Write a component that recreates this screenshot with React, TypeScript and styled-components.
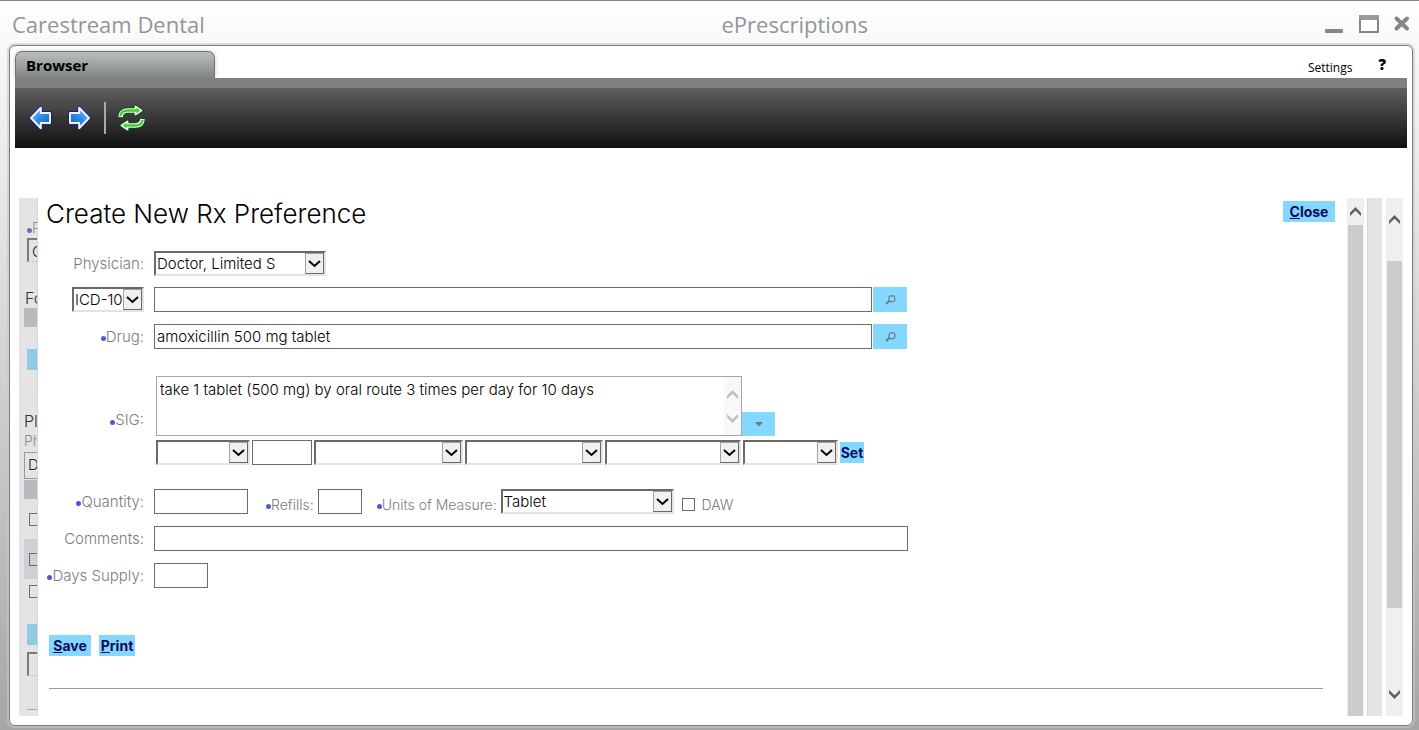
import React from "react";
import styled, { createGlobalStyle, css } from "styled-components";

const GlobalStyle = createGlobalStyle`
  *, *::before, *::after { box-sizing: border-box; }
  body { margin: 0; }
`;

const formFont = `"Century Gothic", Inter, "Open Sans", sans-serif`;
const chromeFont = `"Segoe UI", "Open Sans", "Noto Sans", sans-serif`;

/* ---------- window chrome ---------- */

const Window = styled.div`
  min-height: 100vh;
  display: flex;
  flex-direction: column;
  padding: 0 6px 4px 9px;
  border-top: 1px solid #858585;
  background: linear-gradient(#ffffff, #f6f6f6 8%, #e4e4e4 30%, #a6a6a6);
  font-family: ${chromeFont};
`;

const TitleBar = styled.header`
  height: 44px;
  display: flex;
  align-items: center;
  margin: 0 -6px 0 -9px;
  padding-top: 2px;
  color: #949599;
  font-size: 22px;
  line-height: 32px;
`;

const TitleHalf = styled.div`
  flex: 1 1 50%;
  display: flex;
  align-items: center;
  justify-content: space-between;
  padding: 0 8px 0 12px;
`;

const WindowButtons = styled.div`
  display: flex;
  align-items: center;
  gap: 14px;
`;

const WindowButton = styled.button`
  display: flex;
  padding: 0;
  border: 0;
  background: none;
`;

const Panel = styled.main`
  flex: 1;
  display: flex;
  flex-direction: column;
  padding: 5px;
  border: 1px solid #7b7b7b;
  border-radius: 6px;
  background: #fff;
  box-shadow: 0 0 0 2px rgba(200, 200, 200, 0.6);
`;

const TabRow = styled.div`
  display: flex;
  justify-content: space-between;
  height: 27px;
`;

const Tab = styled.button`
  width: 200px;
  padding: 0 10px;
  border: 1px solid #6f7373;
  border-bottom: 0;
  border-radius: 7px 7px 0 0;
  background: linear-gradient(#bcbfbf, #7f8483);
  box-shadow: 0 0 5px rgba(0, 0, 0, 0.2);
  font: bold 15px/20px ${chromeFont};
  text-align: left;
  color: #000;
`;

const TabLinks = styled.div`
  display: flex;
  align-items: center;
  gap: 26px;
  padding-right: 20px;
`;

const SettingsLink = styled.a`
  padding-top: 6px;
  font-size: 12px;
  line-height: 16px;
  color: #000;
  text-decoration: none;
`;

const HelpButton = styled.button`
  padding: 0 1px 2px 0;
  border: 0;
  background: none;
  font: 800 15px/20px ${chromeFont};
  color: #000;
`;

const Toolbar = styled.nav`
  display: flex;
  align-items: center;
  height: 70px;
  padding: 0 13px;
  border-top: 10px solid #7d8281;
  background: linear-gradient(#5f5f5f, #101010);
  gap: 12px;
`;

const ToolButton = styled.button`
  display: flex;
  padding: 0;
  border: 0;
  background: none;
`;

const ToolDivider = styled.span`
  width: 2px;
  height: 32px;
  background: #a9a9a9;
`;

/* ---------- content area ---------- */

const Content = styled.div`
  flex: 1;
  display: flex;
  margin-top: 50px;
  padding: 0 4px 4px;
  font-family: ${formFont};
`;

const Underlay = styled.aside`
  width: 19px;
  flex: none;
  overflow: hidden;
  border-right: 1px solid #d6d6d6;
  background: #e4e4e4;
  white-space: nowrap;
  display: flex;
  flex-direction: column;
  align-items: flex-start;
`;

const UnderText = styled.span<{ $muted?: boolean; $indent?: number; $top?: number }>`
  display: flex;
  align-items: center;
  font-size: ${(p) => (p.$muted ? 14 : 16)}px;
  font-weight: 300;
  line-height: 20px;
  margin: ${(p) => p.$top ?? 0}px 0 0 ${(p) => p.$indent ?? 6}px;
  color: ${(p) => (p.$muted ? "#8d8d8d" : "#333")};
`;

const UnderDot = styled.i`
  width: 5px;
  height: 5px;
  margin-top: 5px;
  border-radius: 50%;
  background: #6470cc;
`;

const UnderField = styled.span<{ $top?: number; $thin?: boolean }>`
  width: 60px;
  height: ${(p) => (p.$thin ? 27 : 24)}px;
  flex: none;
  margin: ${(p) => p.$top ?? 0}px 0 0 ${(p) => (p.$thin ? 5 : 8)}px;
  padding-left: 3px;
  border: ${(p) => (p.$thin ? "1px solid #999" : "2px solid #7b7b7b")};
  ${(p) => !p.$thin && "border-bottom: 1px solid #cfcfcf;"}
  font-size: 15px;
  font-weight: 300;
  line-height: 24px;
  color: #222;
`;

const UnderBand = styled.div<{ $top?: number; $tall?: boolean }>`
  width: 60px;
  height: ${(p) => (p.$tall ? 40 : 19)}px;
  flex: none;
  margin: ${(p) => p.$top ?? 0}px 0 0 5px;
  padding: ${(p) => (p.$tall ? "14px 5px" : 0)};
  background: ${(p) => (p.$tall ? "#cfcfd5" : "#b9bac0")};
`;

const UnderAction = styled.span<{ $top: number }>`
  width: 60px;
  height: 21px;
  flex: none;
  margin: ${(p) => p.$top}px 0 0 8px;
  background: #8fcae7;
`;

const UnderRule = styled.span`
  width: 60px;
  height: 1px;
  margin: 33px 0 0 8px;
  background: #a5a5a5;
`;

const Check = styled.input<{ $top?: number; $left?: number }>`
  appearance: none;
  display: block;
  flex: none;
  width: 13px;
  height: 13px;
  margin: ${(p) => p.$top ?? 0}px 0 0 ${(p) => p.$left ?? 0}px;
  border: 1px solid #6b6b6b;
  background: transparent;
`;

const Dialog = styled.section`
  flex: 1;
  min-width: 0;
  padding: 2px 12px 0 8px;
`;

const DialogHeader = styled.div`
  display: flex;
  justify-content: space-between;
  align-items: flex-start;
`;

const DialogTitle = styled.h1`
  margin: 0;
  font-size: 26px;
  font-weight: 300;
  line-height: 28px;
  color: #000;
`;

const ActionButton = styled.button<{ $w: number }>`
  width: ${(p) => p.$w}px;
  height: 21px;
  padding: 0;
  border: 0;
  background: #84d8ff;
  font: 700 14px/21px ${formFont};
  text-align: center;
  color: #0a0a5e;
`;

const CloseButton = styled(ActionButton)`
  margin-top: 1px;
`;

const Form = styled.form`
  display: flex;
  flex-direction: column;
  margin-left: -8px;
  padding-top: 23px;
`;

const Row = styled.div<{ $after?: number }>`
  display: flex;
  align-items: center;
  margin-bottom: ${(p) => p.$after ?? 12}px;
`;

const LabelCell = styled.div<{ $low?: boolean }>`
  width: 106px;
  flex: none;
  margin-right: 10px;
  padding-top: ${(p) => (p.$low ? 28 : 0)}px;
  display: flex;
  justify-content: flex-end;
`;

const Label = styled.label<{ $required?: boolean }>`
  display: flex;
  align-items: center;
  font-size: 15px;
  font-weight: 300;
  line-height: 18px;
  color: #7c7c7c;
  white-space: nowrap;
  ${(p) =>
    p.$required &&
    css`
      &::before {
        content: "";
        width: 5px;
        height: 5px;
        margin-top: 4px;
        border-radius: 50%;
        background: #4a5ad8;
      }
    `}
`;

const InlineLabel = styled(Label)<{ $before: number }>`
  margin: 6px 4px 0 ${(p) => p.$before}px;
  font-size: 14px;
`;

const fieldText = css`
  font-family: ${formFont};
  font-size: 15px;
  font-weight: 300;
  color: #000;
`;

const TextInput = styled.input<{ $w: number }>`
  ${fieldText}
  flex: 0 1 ${(p) => p.$w}px;
  width: ${(p) => p.$w}px;
  min-width: 0;
  height: 25px;
  padding: 0 2px;
  border: 1px solid #6c6c6c;
  border-radius: 0;
  background: #fff;
`;

const SelectBox = styled.span<{ $w: number }>`
  position: relative;
  flex: 0 1 ${(p) => p.$w}px;
  display: flex;
`;

const SelectControl = styled.select`
  ${fieldText}
  appearance: none;
  width: 100%;
  height: 25px;
  padding: 0 19px 0 1px;
  border: 2px solid;
  border-color: #696969 #e3e3e3 #e3e3e3 #696969;
  border-radius: 0;
  background: #fff;
`;

const SelectArrow = styled.span`
  position: absolute;
  top: 2px;
  right: 2px;
  width: 19px;
  height: 21px;
  display: flex;
  align-items: center;
  justify-content: center;
  border: 1px solid;
  border-color: #a0a0a0 #696969 #696969 #a0a0a0;
  background: #f0f0f0;
  pointer-events: none;
`;

const IconButton = styled.button<{ $short?: boolean }>`
  width: ${(p) => (p.$short ? 33 : 34)}px;
  flex: none;
  height: ${(p) => (p.$short ? 24 : 25)}px;
  margin-left: ${(p) => (p.$short ? 0 : 1)}px;
  padding: 0;
  border: 0;
  display: flex;
  align-items: center;
  justify-content: center;
  background: #84d8ff;
`;

const SigArea = styled.div`
  display: flex;
  align-items: flex-end;
  flex: 0 1 619px;
  margin-left: 2px;
`;

const SigBox = styled.div`
  flex: 0 1 586px;
  height: 60px;
  display: flex;
  border: 1px solid #a6a6a6;
`;

const SigText = styled.textarea`
  ${fieldText}
  flex: 1;
  min-width: 0;
  padding: 4px 3px;
  border: 0;
  line-height: 18px;
  resize: none;
  overflow: hidden;
  background: #fff;
`;

const SigScroll = styled.div`
  width: 17px;
  padding: 13px 0 12px;
  display: flex;
  flex-direction: column;
  justify-content: space-between;
  align-items: center;
  background: #f8f8f8;
`;

const SigParts = styled.div`
  display: flex;
  flex: 0 1 720px;
  align-items: center;
  gap: 2px;
  margin-left: 118px;
`;

const Actions = styled.div`
  display: flex;
  gap: 8px;
  margin: 35px 0 32px 11px;
`;

const Rule = styled.hr`
  width: auto;
  margin: 0 12px 0 11px;
  border: 0;
  border-top: 1px solid #999;
`;

const Scrollbar = styled.div<{ $inset?: number; $gap?: number }>`
  width: 17px;
  flex: none;
  display: flex;
  flex-direction: column;
  align-items: center;
  padding: ${(p) => p.$inset ?? 0}px 0;
  margin-left: ${(p) => p.$gap ?? 0}px;
  background: #efefef;
`;

const ScrollStep = styled.span`
  height: 27px;
  flex: none;
  display: flex;
  align-items: center;
`;

const Thumb = styled.div<{ $top?: number; $grow: number }>`
  width: 15px;
  flex: ${(p) => p.$grow} 1 0;
  margin-top: ${(p) => p.$top ?? 0}px;
  background: #cccccc;
`;

const Track = styled.div<{ $grow: number }>`
  flex: ${(p) => p.$grow} 1 0;
`;

const Gutter = styled.div`
  width: 15px;
  flex: none;
  margin-left: 3px;
  border-left: 1px solid #d6d6d6;
  background: #e4e4e4;
`;

/* ---------- drawings ---------- */

const ChevronGlyph = ({ up, color = "#606060" }: { up?: boolean; color?: string }) => (
  <svg width="11" height="9" viewBox="0 0 11 9" aria-hidden="true">
    <path
      d={up ? "M0 5.7 5.5 0 11 5.7V9L5.500 3.800 0 9Z" : "M0 3.300 5.500 9 11 3.300V0L5.500 5.200 0 0Z"}
      fill={color}
    />
  </svg>
);

const DropGlyph = () => (
  <svg width="13" height="8" viewBox="0 0 13 8" aria-hidden="true">
    <path d="M1 1l5.500 5L12 1" fill="none" stroke="#000" strokeWidth="2" />
  </svg>
);

const SearchGlyph = () => (
  <svg width="11" height="10" viewBox="0 0 11 10" aria-hidden="true">
    <rect x="4" y=".8" width="5.800" height="5.800" rx="1.800" fill="none" stroke="#6d7985" strokeWidth="1.200" />
    <path d="M4.400 5.800 1 9" stroke="#6d7985" strokeWidth="2" />
  </svg>
);

const ArrowGlyph = ({ flip, id }: { flip?: boolean; id: string }) => (
  <svg width="26" height="28" viewBox="0 0 26 28" aria-hidden="true">
    <defs>
      <linearGradient id={id} x1="0" y1="0" x2="1" y2="1">
        <stop offset="0" stopColor="#8ccbfb" />
        <stop offset=".5" stopColor="#2a8ae6" />
        <stop offset="1" stopColor="#1a5fbc" />
      </linearGradient>
    </defs>
    <g transform={flip ? "matrix(-1 0 0 1 26 0)" : undefined} strokeLinejoin="round">
      <path d="M2.500 14 13 3V8.500H22.500V19.500H13V25Z" fill="#1a2f9a" stroke="#14248c" strokeWidth="3" />
      <path d="M3 14 12.800 3.800V9H22V19H12.800V24.200Z" fill={`url(#${id})`} stroke="#f0f2fa" strokeWidth="2" />
    </g>
  </svg>
);

const CurvedArrow = () => (
  <>
    <g fill="#0c4c1e" stroke="#0c4c1e" strokeLinejoin="round">
      <path d="M3.500 13.500Q4 7.500 11 7.500H19" fill="none" strokeWidth="6.500" />
      <path d="M18.500 3.500 24.500 7.500 18.500 11.500Z" strokeWidth="4" />
    </g>
    <g fill="#ecfbe8" stroke="#ecfbe8" strokeLinejoin="round">
      <path d="M3.500 14Q4 7.500 11 7.500H19" fill="none" strokeWidth="4.600" />
      <path d="M18.500 3.500 24.500 7.500 18.500 11.500Z" strokeWidth="1.800" />
    </g>
    <g fill="#44cc2c" stroke="#44cc2c">
      <path d="M3.500 13Q4 7.500 11 7.500H19.500" fill="none" strokeWidth="2.400" />
      <path d="M19.300 4.800 23.500 7.500 19.300 10.200Z" stroke="none" />
    </g>
  </>
);

const RefreshGlyph = () => (
  <svg width="28" height="30" viewBox="1 0 28 30" aria-hidden="true">
    <CurvedArrow />
    <g transform="rotate(180 14.500 15)">
      <CurvedArrow />
    </g>
  </svg>
);

const MinimizeGlyph = () => (
  <svg width="20" height="20" viewBox="0 0 20 20" aria-hidden="true">
    <rect x="0" y="15" width="18" height="4" rx="1" fill="#868686" />
  </svg>
);

const MaximizeGlyph = () => (
  <svg width="20" height="20" viewBox="0 0 20 20" aria-hidden="true">
    <path d="M0 1H20V19H0Z" fill="#868686" />
    <path d="M0 1H20V6H0Z" fill="#9a9a9a" />
    <path d="M2 6H18V17H2Z" fill="#fff" />
  </svg>
);

const CloseGlyph = () => (
  <svg width="18" height="20" viewBox="0 0 18 20" aria-hidden="true">
    <path d="M3.500 4.500 14 14.500M14 4.500 3.500 14.500" stroke="#858585" strokeWidth="4" strokeLinecap="round" />
  </svg>
);

/* ---------- composed controls ---------- */

const Select = ({ w, id, label, value = "" }: { w: number; id: string; label?: string; value?: string }) => (
  <SelectBox $w={w}>
    <SelectControl id={id} aria-label={label} defaultValue={value}>
      <option value={value}>{value}</option>
    </SelectControl>
    <SelectArrow>
      <DropGlyph />
    </SelectArrow>
  </SelectBox>
);

type FieldLabelProps = { htmlFor: string; required?: boolean; low?: boolean; children: React.ReactNode };

const FieldLabel = ({ htmlFor, required, low, children }: FieldLabelProps) => (
  <LabelCell $low={low}>
    <Label htmlFor={htmlFor} $required={required}>
      {children}
    </Label>
  </LabelCell>
);

/* The edge of the page that stays visible behind the dialog. */
const BehindStrip = () => (
  <Underlay aria-hidden="true" inert>
    <UnderText $muted $indent={8} $top={20}>
      <UnderDot />P
    </UnderText>
    <UnderField>C</UnderField>
    <UnderText $top={26} $indent={6}>Fo</UnderText>
    <UnderBand />
    <UnderAction $top={22} />
    <UnderText $top={41} $indent={5}>Pl</UnderText>
    <UnderText $muted $indent={5}>Ph</UnderText>
    <UnderField $thin $top={1}>D</UnderField>
    <UnderBand $top={1} />
    <Check type="checkbox" $top={14} $left={10} />
    <UnderBand $top={13} $tall>
      <Check type="checkbox" />
    </UnderBand>
    <Check type="checkbox" $top={6} $left={10} />
    <UnderAction $top={26} />
    <UnderField $top={7} />
    <UnderRule />
  </Underlay>
);

export default function App() {
  return (
    <>
      <GlobalStyle />
      <Window>
        <TitleBar>
          <TitleHalf>Carestream Dental</TitleHalf>
          <TitleHalf>
            ePrescriptions
            <WindowButtons>
              <WindowButton aria-label="Minimize"><MinimizeGlyph /></WindowButton>
              <WindowButton aria-label="Maximize"><MaximizeGlyph /></WindowButton>
              <WindowButton aria-label="Close window"><CloseGlyph /></WindowButton>
            </WindowButtons>
          </TitleHalf>
        </TitleBar>

        <Panel>
          <TabRow>
            <Tab>Browser</Tab>
            <TabLinks>
              <SettingsLink href="#settings">Settings</SettingsLink>
              <HelpButton>?</HelpButton>
            </TabLinks>
          </TabRow>
          <Toolbar>
            <ToolButton aria-label="Back"><ArrowGlyph id="arrow-back" /></ToolButton>
            <ToolButton aria-label="Forward"><ArrowGlyph id="arrow-forward" flip /></ToolButton>
            <ToolDivider />
            <ToolButton aria-label="Refresh"><RefreshGlyph /></ToolButton>
          </Toolbar>

          <Content>
            <BehindStrip />
            <Dialog>
              <DialogHeader>
                <DialogTitle>Create New Rx Preference</DialogTitle>
                <CloseButton $w={52}><u>C</u>lose</CloseButton>
              </DialogHeader>

              <Form onSubmit={(e) => e.preventDefault()}>
                <Row $after={11}>
                  <FieldLabel htmlFor="physician">Physician:</FieldLabel>
                  <Select id="physician" w={172} value="Doctor, Limited S" />
                </Row>
                <Row>
                  <LabelCell>
                    <Select id="code-set" w={72} label="Diagnosis code set" value="ICD-10" />
                  </LabelCell>
                  <TextInput $w={718} aria-label="Diagnosis" />
                  <IconButton type="button" aria-label="Search diagnosis"><SearchGlyph /></IconButton>
                </Row>
                <Row $after={27}>
                  <FieldLabel htmlFor="drug" required>Drug:</FieldLabel>
                  <TextInput id="drug" $w={718} defaultValue="amoxicillin 500 mg tablet" />
                  <IconButton type="button" aria-label="Search drug"><SearchGlyph /></IconButton>
                </Row>
                <Row $after={4}>
                  <FieldLabel htmlFor="sig" required low>SIG:</FieldLabel>
                  <SigArea>
                    <SigBox>
                      <SigText id="sig" defaultValue="take 1 tablet (500 mg) by oral route 3 times per day for 10 days" />
                      <SigScroll>
                        <ChevronGlyph up color="#bfbfbf" />
                        <ChevronGlyph color="#bfbfbf" />
                      </SigScroll>
                    </SigBox>
                    <IconButton type="button" $short aria-label="SIG choices">
                      <svg width="8" height="5" viewBox="0 0 8 5" aria-hidden="true">
                        <path d="M0 0H8L4 4.500Z" fill="#6d7985" />
                      </svg>
                    </IconButton>
                  </SigArea>
                </Row>
                <Row $after={24}>
                  <SigParts>
                    <Select id="sig-verb" w={94} label="Action" />
                    <TextInput $w={60} aria-label="Dose" />
                    <Select id="sig-form" w={149} label="Dose form" />
                    <Select id="sig-route" w={138} label="Route" />
                    <Select id="sig-frequency" w={136} label="Frequency" />
                    <Select id="sig-duration" w={95} label="Duration" />
                    <ActionButton type="button" $w={24}>Set</ActionButton>
                  </SigParts>
                </Row>
                <Row>
                  <FieldLabel htmlFor="quantity" required>Quantity:</FieldLabel>
                  <TextInput id="quantity" $w={94} />
                  <InlineLabel htmlFor="refills" $required $before={18}>Refills:</InlineLabel>
                  <TextInput id="refills" $w={44} />
                  <InlineLabel htmlFor="units" $required $before={15}>Units of Measure:</InlineLabel>
                  <Select id="units" w={173} value="Tablet" />
                  <Check id="daw" type="checkbox" $top={6} $left={8} />
                  <InlineLabel htmlFor="daw" $before={7}>DAW</InlineLabel>
                </Row>
                <Row>
                  <FieldLabel htmlFor="comments">Comments:</FieldLabel>
                  <TextInput id="comments" $w={754} />
                </Row>
                <Row>
                  <FieldLabel htmlFor="days" required>Days Supply:</FieldLabel>
                  <TextInput id="days" $w={54} />
                </Row>
                <Actions>
                  <ActionButton type="submit" $w={42}><u>S</u>ave</ActionButton>
                  <ActionButton type="button" $w={36}><u>P</u>rint</ActionButton>
                </Actions>
                <Rule />
              </Form>
            </Dialog>

            <Scrollbar>
              <ScrollStep><ChevronGlyph up /></ScrollStep>
              <Thumb $grow={1} />
            </Scrollbar>
            <Gutter />
            <Scrollbar $gap={4} $inset={8}>
              <ScrollStep><ChevronGlyph up /></ScrollStep>
              <Thumb $top={28} $grow={347} />
              <Track $grow={73} />
              <ScrollStep><ChevronGlyph /></ScrollStep>
            </Scrollbar>
          </Content>
        </Panel>
      </Window>
    </>
  );
}
